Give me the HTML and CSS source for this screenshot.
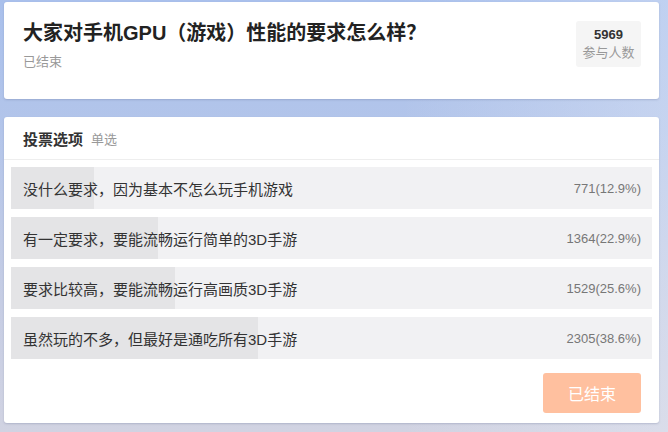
FILE: index.html
```html
<!DOCTYPE html>
<html lang="zh-CN">
<head>
<meta charset="utf-8">
<title>投票</title>
<link rel="stylesheet" href="styles.css">
</head>
<body>
<div class="page">
  <section class="card card-top">
    <div class="top-main">
      <h1 class="title">大家对手机GPU（游戏）性能的要求怎么样？</h1>
      <div class="status">已结束</div>
    </div>
    <div class="stat">
      <div class="stat-num">5969</div>
      <div class="stat-label">参与人数</div>
    </div>
  </section>

  <section class="card card-vote">
    <div class="vote-head">
      <span class="vote-title">投票选项</span>
      <span class="vote-type">单选</span>
    </div>
    <div class="options">
      <div class="option" style="--p:12.9%">
        <span class="opt-text">没什么要求，因为基本不怎么玩手机游戏</span>
        <span class="opt-count">771(12.9%)</span>
      </div>
      <div class="option" style="--p:22.9%">
        <span class="opt-text">有一定要求，要能流畅运行简单的3D手游</span>
        <span class="opt-count">1364(22.9%)</span>
      </div>
      <div class="option" style="--p:25.6%">
        <span class="opt-text">要求比较高，要能流畅运行高画质3D手游</span>
        <span class="opt-count">1529(25.6%)</span>
      </div>
      <div class="option" style="--p:38.6%">
        <span class="opt-text">虽然玩的不多，但最好是通吃所有3D手游</span>
        <span class="opt-count">2305(38.6%)</span>
      </div>
    </div>
    <div class="vote-foot">
      <button class="btn-ended" type="button">已结束</button>
    </div>
  </section>
</div>
</body>
</html>
```

FILE: styles.css
```css
* { box-sizing: border-box; }

html, body {
  margin: 0;
  height: 100%;
}

body {
  font-family: "Liberation Sans", "Noto Sans CJK SC", sans-serif;
  color: #333;
  background:
    linear-gradient(90deg, rgba(255,255,255,0) 0%, rgba(255,255,255,0) 60%, rgba(235,240,250,0.35) 100%),
    linear-gradient(180deg, #a9c0ec 0%, #b3c5ea 30%, #c6cde4 70%, #d1d3e2 100%);
}

.page {
  padding: 2px 9px 0 4px;
}

.card {
  background: #fff;
  border-radius: 3px;
  box-shadow: 0 1px 2px rgba(80, 90, 130, 0.25);
}

.card-top {
  height: 97px;
  display: flex;
  justify-content: space-between;
  align-items: flex-start;
  padding: 19px 18px 0 19px;
}

.title {
  margin: 0;
  font-size: 20px;
  line-height: 24px;
  font-weight: bold;
  color: #222;
}

.status {
  margin-top: 8px;
  font-size: 13px;
  line-height: 18px;
  color: #999;
}

.stat {
  width: 65px;
  height: 46px;
  padding-top: 5px;
  background: #f5f5f5;
  border-radius: 3px;
  text-align: center;
}

.stat-num {
  font-size: 13px;
  line-height: 18px;
  font-weight: bold;
  color: #333;
}

.stat-label {
  font-size: 13px;
  line-height: 18px;
  color: #999;
}

.card-vote {
  margin-top: 18px;
  padding-bottom: 10px;
}

.vote-head {
  height: 43px;
  display: flex;
  align-items: center;
  gap: 8px;
  padding-left: 19px;
  border-bottom: 1px solid #eeeeee;
}

.vote-title {
  font-size: 15px;
  font-weight: bold;
  color: #333;
}

.vote-type {
  font-size: 13px;
  color: #999;
}

.options {
  display: flex;
  flex-direction: column;
  gap: 8px;
  padding: 7px 7px 0;
}

.option {
  height: 42px;
  display: flex;
  align-items: center;
  justify-content: space-between;
  padding: 0 11px 0 12px;
  background: linear-gradient(90deg, #e4e4e6 0, #e4e4e6 var(--p), #f1f1f3 var(--p), #f1f1f3 100%);
}

.opt-text {
  font-size: 15px;
  color: #333;
}

.opt-count {
  font-size: 13px;
  color: #777;
}

.vote-foot {
  display: flex;
  justify-content: flex-end;
  padding: 14px 18px 0 0;
}

.btn-ended {
  width: 98px;
  height: 40px;
  border: 0;
  border-radius: 3px;
  background: #ffc09f;
  color: #fff;
  font-family: "Liberation Sans", "Noto Sans CJK SC", sans-serif;
  font-size: 16px;
}
```
